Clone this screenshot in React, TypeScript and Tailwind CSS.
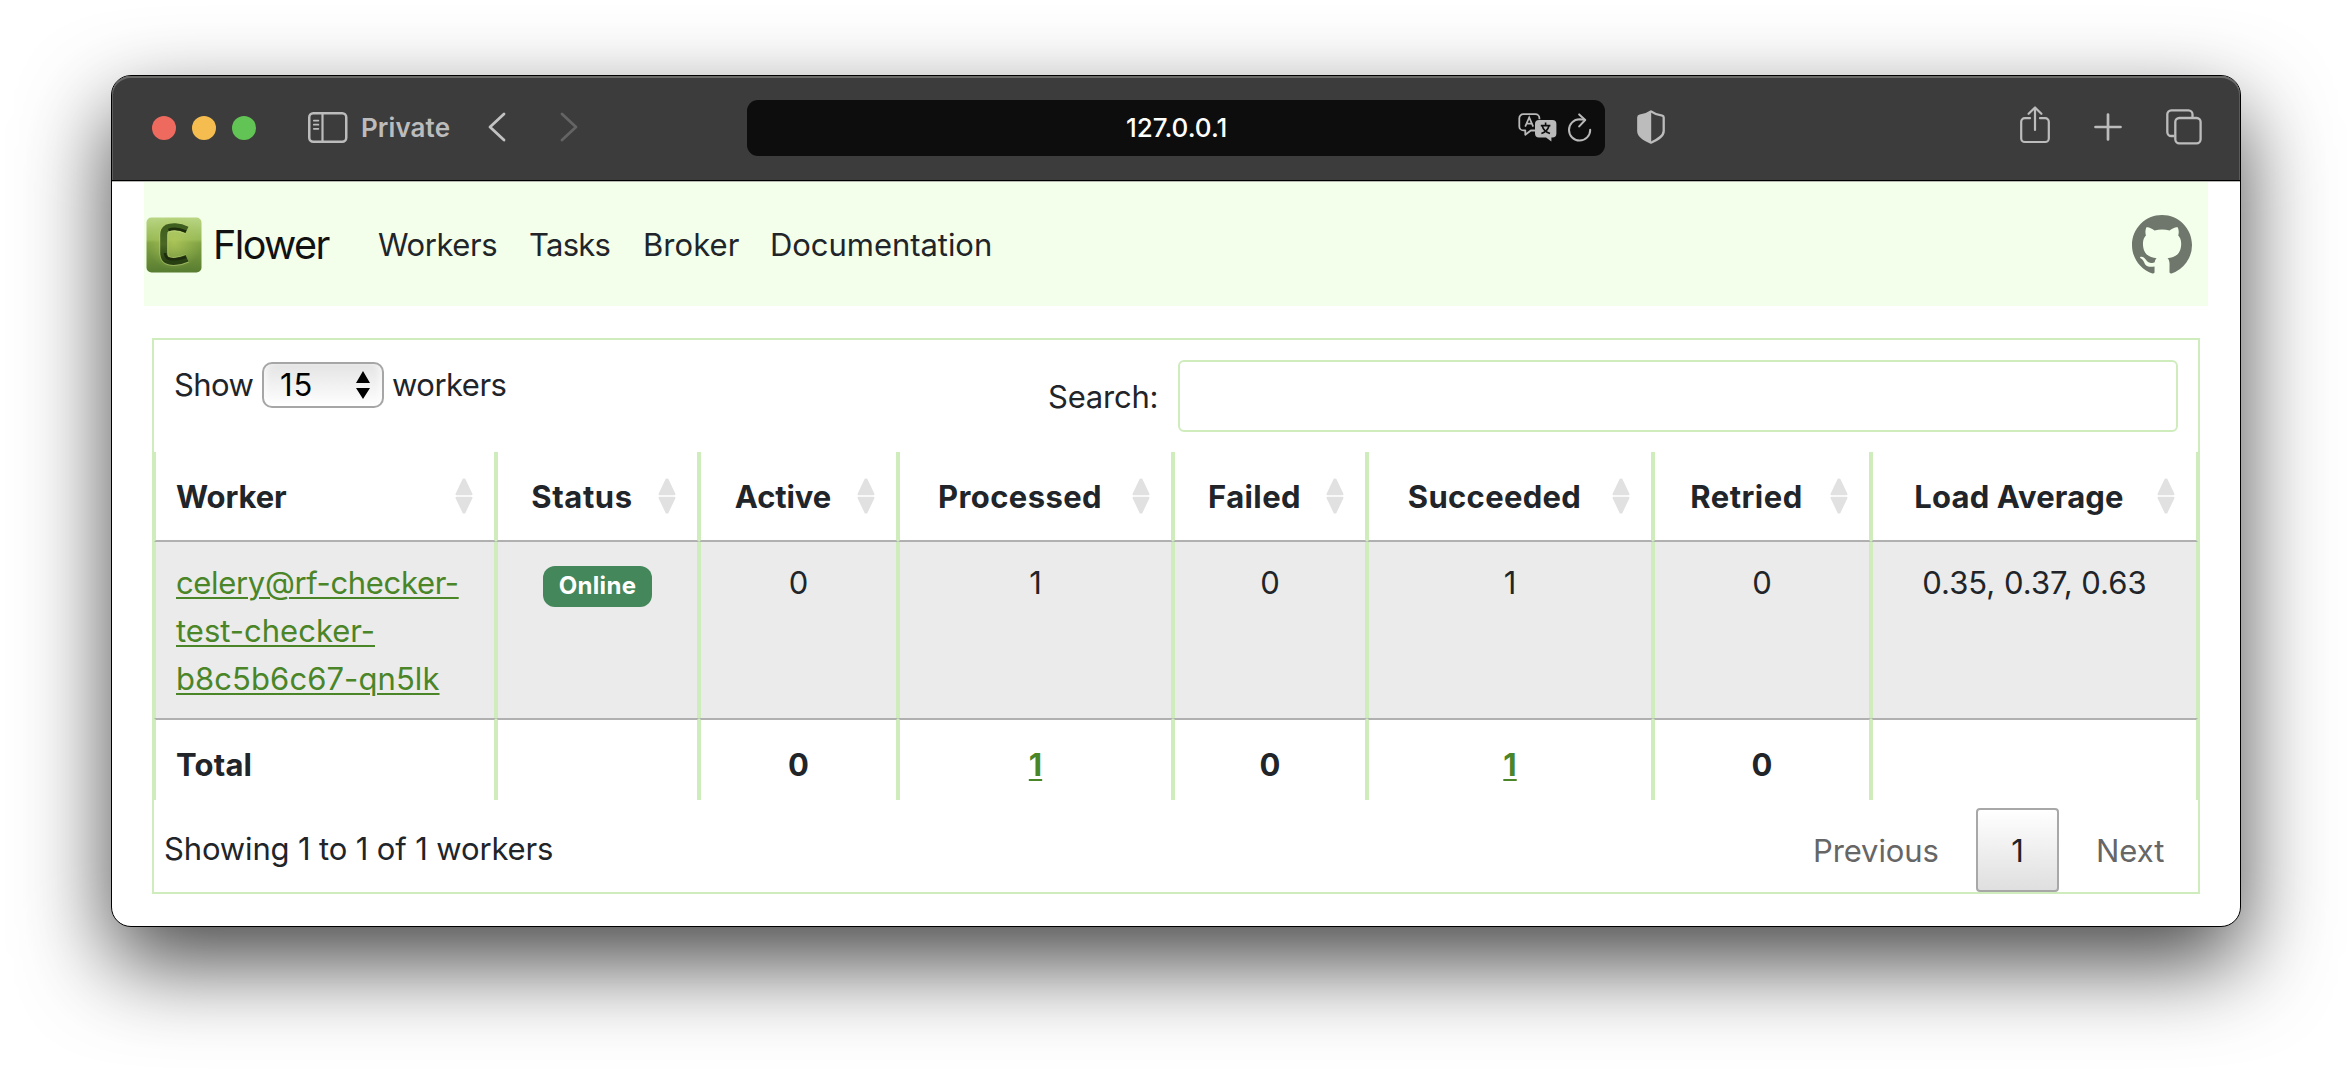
import type { ReactNode } from "react";

const columns = [
  { title: "Worker", width: "w-[342px]", text: "tracking-[-0.1px]" },
  { title: "Status", width: "w-[203px]", text: "tracking-[0.6px]" },
  { title: "Active", width: "w-[199px]", text: "tracking-[-0.1px]" },
  { title: "Processed", width: "w-[275px]", text: "tracking-[0.4px]" },
  { title: "Failed", width: "w-[194px]", text: "tracking-[0.4px]" },
  { title: "Succeeded", width: "w-[286px]", text: "tracking-[0.3px]" },
  { title: "Retried", width: "w-[218px]", text: "tracking-[0.5px]" },
  { title: "Load Average", width: "w-[327px]", text: "tracking-[0.15px]" },
];

function SidebarIcon() {
  return (
    <svg className="h-[31px] w-[40px]" viewBox="0 0 40 31" fill="none" stroke="#bcbcbc">
      <rect x="1.25" y="1.25" width="37" height="28.5" rx="4" strokeWidth="2.5" />
      <path d="M14.5 1v29" strokeWidth="2.2" />
      <path d="M5.8 8.6h4.6M5.8 12.7h4.6M5.8 16.8h4.6" strokeWidth="1.7" strokeLinecap="round" />
    </svg>
  );
}

function Chevron({ flip = false }: { flip?: boolean }) {
  return (
    <svg
      className={flip ? "h-[30px] w-[18px] text-[#646464]" : "h-[30px] w-[18px] text-[#c2c2c2]"}
      viewBox="0 0 18 30"
      fill="none"
      stroke="currentColor"
      strokeWidth="2.8"
      strokeLinecap="round"
      strokeLinejoin="round"
    >
      <path d={flip ? "M2 2l14 13L2 28" : "M16 2L2 15l14 13"} />
    </svg>
  );
}

function TranslateIcon() {
  return (
    <svg className="h-[29px] w-[39px]" viewBox="0 0 39 29" fill="none">
      <path
        d="M17 17.5h-4.2L7.3 21.7v-4.3H5.3a4 4 0 0 1-4-4V5.2a4 4 0 0 1 4-4h12.1a4 4 0 0 1 4 4v1"
        stroke="#b9b9b9"
        strokeWidth="1.8"
        strokeLinejoin="round"
      />
      <path d="M7.2 13.6L11.2 4.3l4 9.3M8.6 10.6h5.2" stroke="#b9b9b9" strokeWidth="1.7" />
      <path
        d="M21 7h13.4a4 4 0 0 1 4 4v9.4a4 4 0 0 1-4 4h-1v4.2l-5.4-4.2h-7a4 4 0 0 1-4-4V11a4 4 0 0 1 4-4z"
        fill="#b9b9b9"
      />
      <path
        d="M27.6 9.6v2.4M22.8 12.6h9.6M31 12.8c-.9 3.6-3.7 6.4-7.6 7.8M24.2 12.8c.9 3.6 3.7 6.4 7.8 7.8"
        stroke="#0d0d0d"
        strokeWidth="1.6"
      />
    </svg>
  );
}

function ReloadIcon() {
  return (
    <svg
      className="h-[29px] w-[24px]"
      viewBox="0 0 24 29"
      fill="none"
      stroke="#b9b9b9"
      strokeWidth="2"
      strokeLinecap="round"
      strokeLinejoin="round"
    >
      <path d="M22.2 16.8A10.6 10.6 0 1 1 11.6 6.300L16.600 6.800" />
      <path d="M11.200 1.400l6 5.600-6 6.400" />
    </svg>
  );
}

function ShieldIcon() {
  return (
    <svg className="h-[34px] w-[28px]" viewBox="0 0 28 34">
      <path
        d="M14 1.400c3 2.200 7.400 3.800 11.200 4.300.9.2 1.500.8 1.500 1.800v13.600c0 5.200-5.800 8.400-12.700 11.600C7.100 29.500 1.300 26.300 1.300 21.100V7.500c0-1 .6-1.600 1.500-1.800C6.600 5.200 11 3.600 14 1.400z"
        fill="none"
        stroke="#bcbcbc"
        strokeWidth="2.3"
        strokeLinejoin="round"
      />
      <path
        d="M14.2 1.200C11 3.600 6.600 5.200 2.800 5.700 1.900 5.900 1.300 6.500 1.300 7.500v13.600c0 5.200 5.800 8.400 12.900 11.600z"
        fill="#bcbcbc"
      />
    </svg>
  );
}

function ShareIcon() {
  return (
    <svg
      className="h-[38px] w-[30px]"
      viewBox="0 0 30 38"
      fill="none"
      stroke="#bcbcbc"
      strokeWidth="2.2"
      strokeLinecap="round"
      strokeLinejoin="round"
    >
      <path d="M10 12.200H4.800A3.600 3.600 0 0 0 1.200 15.800v16.600a3.600 3.600 0 0 0 3.600 3.600h20.400a3.600 3.600 0 0 0 3.600-3.600V15.800a3.600 3.600 0 0 0-3.600-3.600H20" />
      <path d="M15 24V2M8.600 7.800L15 1.500l6.400 6.300" />
    </svg>
  );
}

function PlusIcon() {
  return (
    <svg className="h-[28px] w-[28px]" viewBox="0 0 28 28" stroke="#bcbcbc" strokeWidth="2.7" strokeLinecap="round">
      <path d="M14 1.500v25M1.500 14h25" />
    </svg>
  );
}

function TabsIcon() {
  return (
    <svg className="h-[36px] w-[36px]" viewBox="0 0 36 36" fill="none" stroke="#bcbcbc" strokeWidth="2.300">
      <path d="M8.500 27H5.300a4 4 0 0 1-4-4V5.300a4 4 0 0 1 4-4h17.200a4 4 0 0 1 4 4v3" />
      <rect x="9.300" y="9" width="25.300" height="25.300" rx="4" />
    </svg>
  );
}

function CeleryLogo() {
  return (
    <svg className="size-14" viewBox="0 0 56 56">
      <defs>
        <linearGradient id="tile" x1="0" y1="0" x2="0" y2="1">
          <stop offset="0" stopColor="#b9d683" />
          <stop offset="0.4" stopColor="#98b957" />
          <stop offset="0.46" stopColor="#82a344" />
          <stop offset="1" stopColor="#587c30" />
        </linearGradient>
        <radialGradient id="glow" cx="0.5" cy="0.45" r="0.5">
          <stop offset="0" stopColor="#b6cc5c" stopOpacity="0.75" />
          <stop offset="1" stopColor="#a9c65a" stopOpacity="0" />
        </radialGradient>
        <linearGradient id="stroke" x1="0" y1="0" x2="0" y2="1">
          <stop offset="0" stopColor="#3f5f20" />
          <stop offset="0.5" stopColor="#4a6823" />
          <stop offset="1" stopColor="#283f12" />
        </linearGradient>
      </defs>
      <rect x="0.500" y="0.500" width="55" height="55" rx="5" fill="url(#tile)" />
      <rect x="0.500" y="0.500" width="55" height="55" rx="5" fill="url(#glow)" />
      <path
        d="M41 13C33 9.500 25 9.500 21 11.500c-3 1.600-3.200 4-3.200 7v17c0 3.600.8 6.200 3.500 7.700 4 2 12 1.600 19.900-1.900"
        fill="none"
        stroke="#c3d880"
        strokeOpacity="0.5"
        strokeWidth="9"
      />
      <path
        d="M41 12.800C33 9 25 9 21 11c-3 1.600-3.300 4-3.300 7v17.500c0 3.600.8 6.200 3.500 7.700 4 2 12 1.600 19.900-1.900"
        fill="none"
        stroke="url(#stroke)"
        strokeWidth="7"
      />
      <path
        d="M40 14.500C33 11.500 26 11.500 22.500 13M19 36c.3 3 1 4.500 3 5.500 4 1.500 12 1 18-1.500"
        fill="none"
        stroke="#1d2c0d"
        strokeWidth="2.500"
      />
    </svg>
  );
}

function GithubMark() {
  return (
    <svg className="size-[60px]" viewBox="0 0 16 16" fill="#6f766c">
      <path d="M8 0C3.580 0 0 3.580 0 8c0 3.540 2.290 6.530 5.470 7.590.4.070.55-.17.55-.38 0-.19-.01-.82-.01-1.490-2.010.37-2.530-.49-2.690-.94-.09-.23-.48-.94-.82-1.130-.28-.15-.68-.52-.01-.53.63-.01 1.080.58 1.230.82.72 1.210 1.870.87 2.330.66.070-.52.28-.87.51-1.070-1.780-.2-3.640-.89-3.640-3.950 0-.87.31-1.590.82-2.150-.08-.2-.36-1.020.08-2.120 0 0 .67-.21 2.200.82.64-.18 1.320-.27 2-.27s1.360.09 2 .27c1.530-1.040 2.200-.82 2.200-.82.44 1.100.16 1.920.08 2.120.51.56.82 1.270.82 2.150 0 3.070-1.870 3.750-3.650 3.950.29.25.54.73.54 1.480 0 1.070-.01 1.930-.01 2.200 0 .21.15.46.55.38A8.010 8.010 0 0 0 16 8c0-4.420-3.580-8-8-8" />
    </svg>
  );
}

function SortIcon() {
  return (
    <svg
      className="absolute right-[21px] top-[26px] h-[36px] w-[18px]"
      viewBox="0 0 18 36"
      fill="#e1e1e1"
      stroke="#e1e1e1"
      strokeWidth="2"
      strokeLinejoin="round"
    >
      <path d="M8.500 1.500h1L16.500 16.200h-15zM8.500 34.500h1L16.500 19.800h-15z" />
    </svg>
  );
}

function Toolbar() {
  return (
    <div className="flex h-[106px] shrink-0 items-center rounded-t-[19px] border-b border-b-[#b5b8b1] bg-[#3c3c3c] pr-[38px] pb-[2px] pl-[40px] shadow-[inset_0_-1px_0_#000,inset_0_2px_0_#6a6b69,inset_1px_0_0_#5c5c5c,inset_-1px_0_0_#5c5c5c]">
      <div className="flex gap-4">
        <span className="size-6 rounded-full bg-[#ee6a5f]" />
        <span className="size-6 rounded-full bg-[#f5bd4f]" />
        <span className="size-6 rounded-full bg-[#61c454]" />
      </div>
      <div className="ml-[52px] flex items-center">
        <span className="pb-px">
          <SidebarIcon />
        </span>
        <span className="ml-[13px] w-[89px] text-[26px] font-semibold tracking-[0.1px] text-[#bcbcbc]">Private</span>
      </div>
      <div className="ml-[38px] flex gap-[54px] pb-[2px]">
        <Chevron />
        <Chevron flip />
      </div>
      <div className="ml-[169px] flex h-14 w-[858px] items-center rounded-[11px] bg-[#0d0d0d] pr-[13px]">
        <span className="ml-[379px] flex-1 text-[26px] font-medium text-white">127.0.0.1</span>
        <TranslateIcon />
        <span className="ml-[11px] pb-px">
          <ReloadIcon />
        </span>
      </div>
      <div className="ml-[32px] pb-px">
        <ShieldIcon />
      </div>
      <div className="ml-auto flex items-center pb-[2px]">
        <span className="mr-[44px] mb-1">
          <ShareIcon />
        </span>
        <span className="mr-[44px]">
          <PlusIcon />
        </span>
        <TabsIcon />
      </div>
    </div>
  );
}

function Navbar() {
  return (
    <nav className="mx-8 flex h-[124px] items-center bg-[#f3ffeb] pt-px pr-4 pl-[2px]">
      <CeleryLogo />
      <span className="ml-[11px] w-[165px] text-[39.5px] tracking-[-1.6px] text-[#111]">Flower</span>
      <a className="w-[151px] tracking-[-0.43px]">Workers</a>
      <a className="w-[114px] tracking-[-0.76px]">Tasks</a>
      <a className="w-[127px] tracking-[0.05px]">Broker</a>
      <a className="tracking-[-0.05px]">Documentation</a>
      <span className="ml-auto">
        <GithubMark />
      </span>
    </nav>
  );
}

function Cell({ children, className = "text-center" }: { children?: ReactNode; className?: string }) {
  return <td className={`border-x-2 border-[#cfecbd] px-5 pt-[17px] pb-[15px] align-top ${className}`}>{children}</td>;
}

function TotalCell({ children, className = "text-center" }: { children?: ReactNode; className?: string }) {
  return (
    <th
      className={`h-[82px] border-x-2 border-t-2 border-x-[#cfecbd] border-t-[#b0b0b0] px-5 pt-[21px] pb-[11px] align-top ${className}`}
    >
      {children}
    </th>
  );
}

const link = "text-[#4a8528] underline decoration-2 underline-offset-[3px]";

function WorkersTable() {
  return (
    <table className="w-[2044px] table-fixed border-separate border-spacing-0">
      <thead>
        <tr>
          {columns.map((c, i) => (
            <th
              key={c.title}
              className={`relative h-[90px] border-x-2 border-b-2 border-x-[#cfecbd] border-b-[#b0b0b0] pt-[2px] pr-[51px] pb-0 pl-[20px] whitespace-nowrap ${c.width} ${c.text} ${i === 0 ? "text-left" : "text-center"}`}
            >
              {c.title}
              <SortIcon />
            </th>
          ))}
        </tr>
      </thead>
      <tbody className="bg-[#ebebeb]">
        <tr>
          <Cell className="text-left">
            <a className={link}>
              <span className="tracking-[-0.34px]">celery@rf-checker-</span>
              <span>test-checker-</span>
              <span className="tracking-[0.08px]">b8c5b6c67-qn5lk</span>
            </a>
          </Cell>
          <Cell>
            <span className="mx-auto mt-[7px] flex h-[41px] w-[109px] items-center justify-center rounded-xl bg-[#43875b] pb-[2px] text-[24px] font-bold tracking-[0.3px] text-white">
              Online
            </span>
          </Cell>
          <Cell>0</Cell>
          <Cell>1</Cell>
          <Cell>0</Cell>
          <Cell>1</Cell>
          <Cell>0</Cell>
          <Cell>0.35, 0.37, 0.63</Cell>
        </tr>
      </tbody>
      <tfoot>
        <tr>
          <TotalCell className="text-left tracking-[0.2px]">Total</TotalCell>
          <TotalCell />
          <TotalCell>0</TotalCell>
          <TotalCell>
            <a className={link}>1</a>
          </TotalCell>
          <TotalCell>0</TotalCell>
          <TotalCell>
            <a className={link}>1</a>
          </TotalCell>
          <TotalCell>0</TotalCell>
          <TotalCell />
        </tr>
      </tfoot>
    </table>
  );
}

export default function App() {
  return (
    <div className="h-[1074px] w-[2352px] overflow-hidden bg-white pt-[75px] pl-[111px] font-['Inter',sans-serif] text-[31px] leading-[48px] text-[#212529]">
      <div className="flex h-[852px] w-[2130px] flex-col rounded-[20px] border border-black bg-white shadow-[0_36px_88px_rgba(0,0,0,0.72)]">
        <Toolbar />
        <Navbar />
        <main className="mx-[40px] mt-8 flex h-[556px] flex-col border-2 border-[#cfecbd]">
          <div className="flex h-[112px] items-start justify-between pt-5 pr-[20px] pl-[20px]">
            <div className="flex h-[50px] items-center">
              <span className="w-[88px] tracking-[-0.6px]">Show</span>
              <span className="flex h-[46px] w-[122px] items-center rounded-[10px] border-2 border-[#a6a6a6] bg-linear-to-b from-[#e4e4e4] to-white pr-[11px] pl-[16px] text-black shadow-[inset_6px_0_6px_-3px_#fff9,inset_-6px_0_6px_-3px_#fff9]">
                <span className="flex-1 tracking-[0.8px]">15</span>
                <svg className="h-[30px] w-[16px]" viewBox="0 0 16 30">
                  <path d="M8 1l7 12H1zM8 29l7-11H1z" fill="#000" />
                </svg>
              </span>
              <span className="ml-[8px] tracking-[-0.5px]">workers</span>
            </div>
            <div className="flex h-[72px] items-center">
              <span className="w-[130px] pt-[2px] tracking-[-0.23px]">Search:</span>
              <input className="h-[72px] w-[1000px] rounded-md border-2 border-[#cfecbd] bg-white px-4 outline-none" />
            </div>
          </div>
          <WorkersTable />
          <div className="flex h-[92px] items-end justify-between pl-[10px]">
            <span className="mb-[19px] tracking-[-0.14px]">Showing 1 to 1 of 1 workers</span>
            <div className="flex items-center text-[#666]">
              <span className="w-[163px] pt-[2px] tracking-[-0.1px]">Previous</span>
              <span className="flex h-[84px] w-[83px] items-center justify-center rounded border-2 border-[#a8a8a8] bg-linear-to-b from-white to-[#dfdfdf] pt-px text-[#212529]">
                1
              </span>
              <span className="ml-[37px] w-[102px] pt-[2px]">Next</span>
            </div>
          </div>
        </main>
      </div>
    </div>
  );
}
